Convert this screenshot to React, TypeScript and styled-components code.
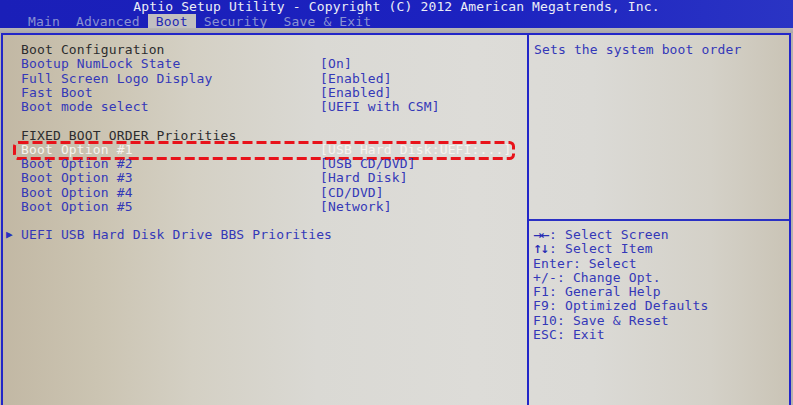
import React from "react";
import styled, { createGlobalStyle } from "styled-components";

const Global = createGlobalStyle`
  *, *::before, *::after { box-sizing: border-box; }
  html, body { margin: 0; padding: 0; background: #b4b2ae; }
  body { width: 793px; height: 405px; overflow: hidden; }
`;

const MONO = `"DejaVu Sans Mono", "Liberation Mono", monospace`;

const Screen = styled.div`
  width: 793px;
  height: 405px;
  display: flex;
  flex-direction: column;
  font-family: ${MONO};
  font-size: 13px;
  letter-spacing: 0.15px;
  background: #b4b2ae;
  overflow: hidden;
`;

const Header = styled.header`
  height: 28px;
  flex: none;
  background: linear-gradient(90deg, #1a1fb8 0%, #1c22c0 60%, #2a34c4 100%);
  display: flex;
  flex-direction: column;
`;

const TitleRow = styled.div`
  height: 14px;
  line-height: 14px;
  text-align: center;
  color: #eceef6;
  white-space: pre;
`;

const TabRow = styled.nav`
  height: 14px;
  display: flex;
  padding-left: 20px;
  align-items: stretch;
`;

const Tab = styled.span<{ $active?: boolean }>`
  padding: 0 8px;
  line-height: 15px;
  white-space: pre;
  color: ${(p) => (p.$active ? "#2228b4" : "#8a92d2")};
  background: ${(p) => (p.$active ? "#c2c0c0" : "transparent")};
`;

const Strip = styled.div`
  height: 5px;
  flex: none;
  background: linear-gradient(180deg, #b8b6b6 0%, #a8a6a8 100%);
`;

const Frame = styled.main`
  flex: 1;
  margin-left: 1px;
  width: 790px;
  display: flex;
  border: 2px solid #2226c8;
  border-bottom: none;
  background: linear-gradient(
    90deg,
    #c2b8a4 0%,
    #cbc4b2 12%,
    #d4d0c4 24%,
    #dad9d4 40%,
    #dddcd8 60%,
    #dbdad6 75%,
    #d4d1c8 90%,
    #cac4b6 100%
  );
`;

const LeftPanel = styled.section`
  width: 526px;
  flex: none;
  padding: 8px 8px 0 18px;
  border-right: 2px solid #2226c8;
  display: flex;
  flex-direction: column;
`;

const Row = styled.div`
  position: relative;
  display: flex;
  height: 14.25px;
  line-height: 14.25px;
  white-space: pre;
`;

const Label = styled.span<{ $tone: "head" | "item" | "sel" }>`
  width: 299px;
  flex: none;
  color: ${(p) =>
    p.$tone === "head" ? "#2c2c2e" : p.$tone === "sel" ? "#f6f4f0" : "#3438b8"};
`;

const Value = styled.span<{ $sel?: boolean }>`
  color: ${(p) => (p.$sel ? "#f6f4f0" : "#3438b8")};
`;

const Spacer = styled.div`
  height: 14.25px;
`;

const SubMenu = styled.div`
  display: flex;
  height: 14.25px;
  line-height: 14.25px;
  margin-left: -16px;
  white-space: pre;
  color: #3438b8;
`;

const Arrow = styled.span`
  width: 16px;
  font-size: 11px;
  color: #2a30c0;
  padding-left: 1px;
`;

const DashBox = styled.svg`
  position: absolute;
  left: -8px;
  top: -2px;
  width: 502px;
  height: 19px;
  overflow: visible;
  pointer-events: none;
`;

const RightPanel = styled.aside`
  flex: 1;
  display: flex;
  flex-direction: column;
`;

const HelpTop = styled.div`
  height: 184px;
  padding: 8px 0 0 5px;
  line-height: 14.25px;
  color: #3438b8;
  white-space: pre;
`;

const Keys = styled.ul`
  list-style: none;
  margin: 0;
  padding: 7px 0 0 4px;
  border-top: 2px solid #2a30c4;
  color: #3438b8;
`;

const Key = styled.li`
  height: 14.25px;
  line-height: 14.25px;
  white-space: pre;
`;

const Glyph = styled.span`
  display: inline-block;
  width: 16px;
  font-family: "DejaVu Sans", sans-serif;
  font-weight: bold;
  font-size: 11px;
  line-height: 14px;
  letter-spacing: -2px;
  color: #2a2eb4;
`;

type Item = { label: string; value?: string; tone: "head" | "item" | "sel" } | null;

const items: Item[] = [
  { label: "Boot Configuration", tone: "head" },
  { label: "Bootup NumLock State", value: "[On]", tone: "item" },
  { label: "Full Screen Logo Display", value: "[Enabled]", tone: "item" },
  { label: "Fast Boot", value: "[Enabled]", tone: "item" },
  { label: "Boot mode select", value: "[UEFI with CSM]", tone: "item" },
  null,
  { label: "FIXED BOOT ORDER Priorities", tone: "head" },
  { label: "Boot Option #1", value: "[USB Hard Disk:UEFI:...]", tone: "sel" },
  { label: "Boot Option #2", value: "[USB CD/DVD]", tone: "item" },
  { label: "Boot Option #3", value: "[Hard Disk]", tone: "item" },
  { label: "Boot Option #4", value: "[CD/DVD]", tone: "item" },
  { label: "Boot Option #5", value: "[Network]", tone: "item" },
  null,
];

const tabs = ["Main", "Advanced", "Boot", "Security", "Save & Exit"];

export default function App() {
  return (
    <>
      <Global />
      <Screen>
        <Header>
          <TitleRow>Aptio Setup Utility - Copyright (C) 2012 American Megatrends, Inc.</TitleRow>
          <TabRow>
            {tabs.map((t) => (
              <Tab key={t} $active={t === "Boot"}>
                {t}
              </Tab>
            ))}
          </TabRow>
        </Header>
        <Strip />
        <Frame>
          <LeftPanel>
            {items.map((it, i) =>
              it === null ? (
                <Spacer key={i} />
              ) : (
                <Row key={i}>
                  <Label $tone={it.tone}>{it.label}</Label>
                  {it.value && <Value $sel={it.tone === "sel"}>{it.value}</Value>}
                  {it.tone === "sel" && (
                    <DashBox viewBox="0 0 502 19">
                      <rect
                        x="1.5"
                        y="1.5"
                        width="499"
                        height="16"
                        rx="4"
                        fill="none"
                        stroke="#e8121a"
                        strokeWidth="3"
                        strokeDasharray="10 4"
                      />
                    </DashBox>
                  )}
                </Row>
              )
            )}
            <SubMenu>
              <Arrow>▶</Arrow>
              UEFI USB Hard Disk Drive BBS Priorities
            </SubMenu>
          </LeftPanel>
          <RightPanel>
            <HelpTop>Sets the system boot order</HelpTop>
            <Keys>
              <Key>
                <Glyph>→←</Glyph>: Select Screen
              </Key>
              <Key>
                <Glyph>↑↓</Glyph>: Select Item
              </Key>
              <Key>Enter: Select</Key>
              <Key>+/-: Change Opt.</Key>
              <Key>F1: General Help</Key>
              <Key>F9: Optimized Defaults</Key>
              <Key>F10: Save &amp; Reset</Key>
              <Key>ESC: Exit</Key>
            </Keys>
          </RightPanel>
        </Frame>
      </Screen>
    </>
  );
}
